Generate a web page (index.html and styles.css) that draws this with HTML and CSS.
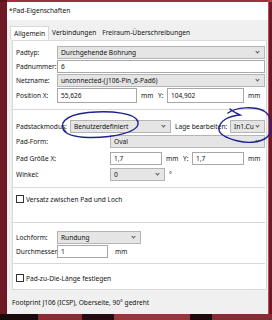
FILE: index.html
```html
<!DOCTYPE html>
<html lang="de">
<head>
  <meta charset="UTF-8" />
  <title>Pad-Eigenschaften</title>
  <link rel="stylesheet" href="styles.css">
</head>
<body>
  <div class="desk">
    <div class="dialog">
      <div class="titlebar">*Pad-Eigenschaften</div>
      <div class="tabs">
        <span class="tab active">Allgemein</span>
        <span class="tab">Verbindungen</span>
        <span class="tab">Freiraum-Überschreibungen</span>
      </div>
      <div class="panel">
        <div class="row">
          <span class="lbl">Padtyp:</span>
          <div class="select grow">Durchgehende Bohrung<span class="chev"></span></div>
        </div>
        <div class="row">
          <span class="lbl">Padnummer:</span>
          <div class="input grow">6</div>
        </div>
        <div class="row">
          <span class="lbl">Netzname:</span>
          <div class="select grow">unconnected-(J106-Pin_6-Pad6)<span class="chev"></span></div>
        </div>
        <div class="row tall">
          <span class="lbl">Position X:</span>
          <div class="input pos-x">55,626</div>
          <span class="unit">mm</span>
          <span class="ylbl">Y:</span>
          <div class="input pos-y">104,902</div>
          <span class="unit">mm</span>
        </div>

        <div class="sep sep-1"></div>

        <div class="row stack-row">
          <span class="lbl lbl-stack">Padstackmodus:</span>
          <div class="select stack-mode">Benutzerdefiniert<span class="chev"></span></div>
          <span class="layer-lbl">Lage bearbeiten:</span>
          <div class="select grow">In1.Cu<span class="chev"></span></div>
        </div>
        <div class="row row-shape">
          <span class="lbl lbl-wide">Pad-Form:</span>
          <div class="select grow">Oval<span class="chev"></span></div>
        </div>
        <div class="row row-size">
          <span class="lbl lbl-wide">Pad Größe X:</span>
          <div class="input size">1,7</div>
          <span class="unit">mm</span>
          <span class="ylbl">Y:</span>
          <div class="input size">1,7</div>
          <span class="unit">mm</span>
        </div>
        <div class="row row-angle">
          <span class="lbl lbl-wide">Winkel:</span>
          <div class="select angle">0<span class="chev"></span></div>
          <span class="deg">°</span>
        </div>

        <div class="sep sep-2"></div>

        <div class="check check-1"><span class="box"></span>Versatz zwischen Pad und Loch</div>

        <div class="sep sep-3"></div>

        <div class="row row-hole">
          <span class="lbl">Lochform:</span>
          <div class="select hole">Rundung<span class="chev"></span></div>
        </div>
        <div class="row">
          <span class="lbl">Durchmesser:</span>
          <div class="input drill">1</div>
          <span class="unit unit-drill">mm</span>
        </div>

        <div class="sep sep-4"></div>

        <div class="check check-2"><span class="box"></span>Pad-zu-Die-Länge festlegen</div>
      </div>
      <div class="footer">Footprint J106 (ICSP), Oberseite, 90° gedreht</div>
    </div>
  </div>

  <!-- hand drawn markings on top of the screenshot -->
  <svg class="marks" width="272" height="320" viewBox="0 0 272 320">
    <path d="M66 132 C58 125 63 115 88 112.5 C112 110.5 136 113 138 122 C140 132 114 138 88 137.5 C74 137 65 134 63 129"/>
    <path d="M228 113 C236 107 254 106 264 111 C272 116 273 129 269 135 C264 142 250 144 238 141 C226 138 218 134 219 128 C220 121 228 116 240 115 C236 113 232 111 230 109"/>
  </svg>
</body>
</html>
```

FILE: styles.css
```css
* {
  box-sizing: border-box;
}

body {
  margin: 0;
  width: 272px;
  height: 320px;
  overflow: hidden;
  position: relative;
  background: #6e1a24;
  font-family: 'Noto Sans', 'Open Sans', sans-serif;
  font-size: 6.6px;
  color: #111;
}

.desk {
  height: 320px;
  padding: 2px 4px 6px 7px;
  background:
    linear-gradient(90deg, #1a0a0c 0 14%, #8a2a34 14% 30%, #240c10 30% 42%, #9a3440 42% 70%, #1e0a0e 70% 78%, #8a2a34 78%) bottom / 100% 6px no-repeat,
    linear-gradient(90deg, #5a1420 0 7px, #a03040 7px 268px, #b4404e 268px) top / 100% 2px no-repeat,
    #6e1a24;
}

.dialog {
  height: 312px;
  display: flex;
  flex-direction: column;
  background: #f0f0f0;
  box-shadow: 1px 0 0 #c04a58;
}

.titlebar {
  height: 18px;
  line-height: 18px;
  padding-left: 2px;
  background: #fff;
}

.tabs {
  display: flex;
  height: 14px;
  margin-top: 6px;
  padding-left: 3px;
}

.tab {
  padding: 0 3px;
  line-height: 14px;
}

.tab.active {
  background: #fff;
  border: 1px solid #d9d9d9;
  border-bottom: none;
  line-height: 13px;
}

.panel {
  height: 250px;
  margin: 0 1px 0 5px;
  padding: 4px 1px 0 3px;
  background: #fff;
  border: 1px solid #d9d9d9;
}

.row {
  display: flex;
  align-items: center;
  height: 14px;
}

.row.tall {
  height: 16px;
}

.lbl {
  flex: none;
  width: 41px;
  white-space: nowrap;
}

.lbl-stack {
  width: 54px;
}

.lbl-wide {
  width: 94px;
}

.select,
.input {
  display: flex;
  align-items: center;
  height: 13px;
  padding-left: 3px;
  white-space: nowrap;
}

.select {
  background: #e5e5e5;
  border: 1px solid #b4b4b4;
}

.input {
  background: #fff;
  border: 1px solid #a8a8a8;
}

.tall .input {
  height: 15px;
}

.grow {
  flex: 1;
}

.chev {
  width: 3px;
  height: 3px;
  margin: 0 5px -1px auto;
  border-right: 1px solid #555;
  border-bottom: 1px solid #555;
  transform: translateY(-1px) rotate(45deg);
}

.unit {
  flex: none;
  width: 21px;
  padding-left: 4px;
}

.ylbl {
  flex: none;
  width: 9px;
}

.pos-x { width: 81px; }
.pos-y { width: 78px; }
.size { width: 54px; }
.stack-mode { width: 101px; }
.angle { width: 55px; }
.hole { width: 84px; }
.drill { width: 51px; }

.unit-drill {
  padding-left: 7px;
}

.layer-lbl {
  flex: none;
  width: 59px;
  padding-left: 4px;
  white-space: nowrap;
}

.deg {
  padding-left: 4px;
}

.stack-row { margin-top: 9px; }
.row-shape { margin-top: 1px; }
.row-size { margin-top: 3px; }
.row-angle { margin-top: 2px; }
.row-hole { margin-top: 7px; }

.sep {
  height: 1px;
  margin-left: -3px;
  background: #d8d8d8;
}

.sep-1 { margin-top: 6px; }
.sep-2 { margin-top: 6px; }
.sep-3 { margin-top: 17px; }
.sep-4 { margin-top: 5px; }

.check {
  display: flex;
  align-items: center;
  height: 12px;
}

.check-1 { margin-top: 5px; }
.check-2 { margin-top: 8px; }

.box {
  width: 8px;
  height: 8px;
  margin-right: 2px;
  border: 1px solid #333;
  background: #fff;
}

.footer {
  flex: 1;
  padding: 8px 0 0 5px;
}

.marks {
  position: absolute;
  left: 0;
  top: 0;
  pointer-events: none;
}

.marks path {
  fill: none;
  stroke: #1e2290;
  stroke-width: 1.4;
  stroke-linecap: round;
}
```
